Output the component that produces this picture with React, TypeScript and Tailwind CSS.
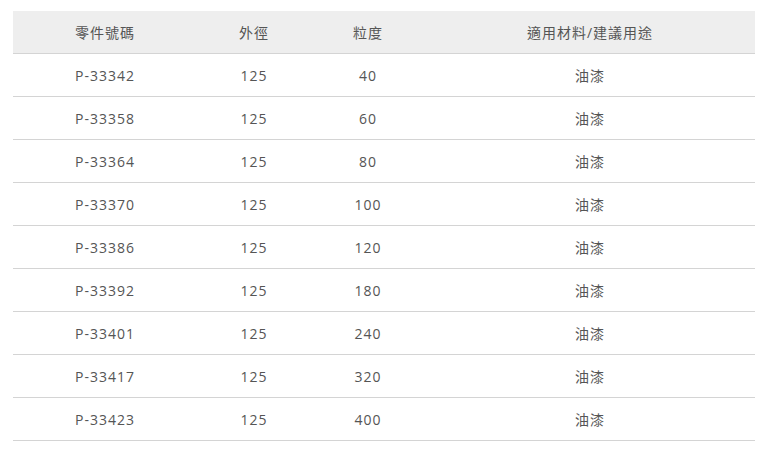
const rows = [
  { part: 'P-33342', od: '125', grit: '40', use: '油漆' },
  { part: 'P-33358', od: '125', grit: '60', use: '油漆' },
  { part: 'P-33364', od: '125', grit: '80', use: '油漆' },
  { part: 'P-33370', od: '125', grit: '100', use: '油漆' },
  { part: 'P-33386', od: '125', grit: '120', use: '油漆' },
  { part: 'P-33392', od: '125', grit: '180', use: '油漆' },
  { part: 'P-33401', od: '125', grit: '240', use: '油漆' },
  { part: 'P-33417', od: '125', grit: '320', use: '油漆' },
  { part: 'P-33423', od: '125', grit: '400', use: '油漆' },
];

export default function App() {
  return (
    <div className="min-h-[457px] bg-white pl-[13px] pt-[11px] font-['Open_Sans','Noto_Sans_CJK_TC',sans-serif]">
      <table className="w-[742px] border-collapse text-center text-[14px] tracking-[1px] text-[#555]">
        <thead>
          <tr className="h-[42px] border-b border-[#d4d4d4] bg-[#eeeeee] [&>th]:pt-[2px]">
            <th className="w-[184px] font-normal">零件號碼</th>
            <th className="w-[114px] font-normal">外徑</th>
            <th className="w-[114px] font-normal">粒度</th>
            <th className="font-normal">適用材料/建議用途</th>
          </tr>
        </thead>
        <tbody>
          {rows.map((r) => (
            <tr key={r.part} className="h-[43px] border-b border-[#d4d4d4] [&>td]:pt-[2px]">
              <td>{r.part}</td>
              <td>{r.od}</td>
              <td>{r.grit}</td>
              <td>{r.use}</td>
            </tr>
          ))}
        </tbody>
      </table>
    </div>
  );
}
